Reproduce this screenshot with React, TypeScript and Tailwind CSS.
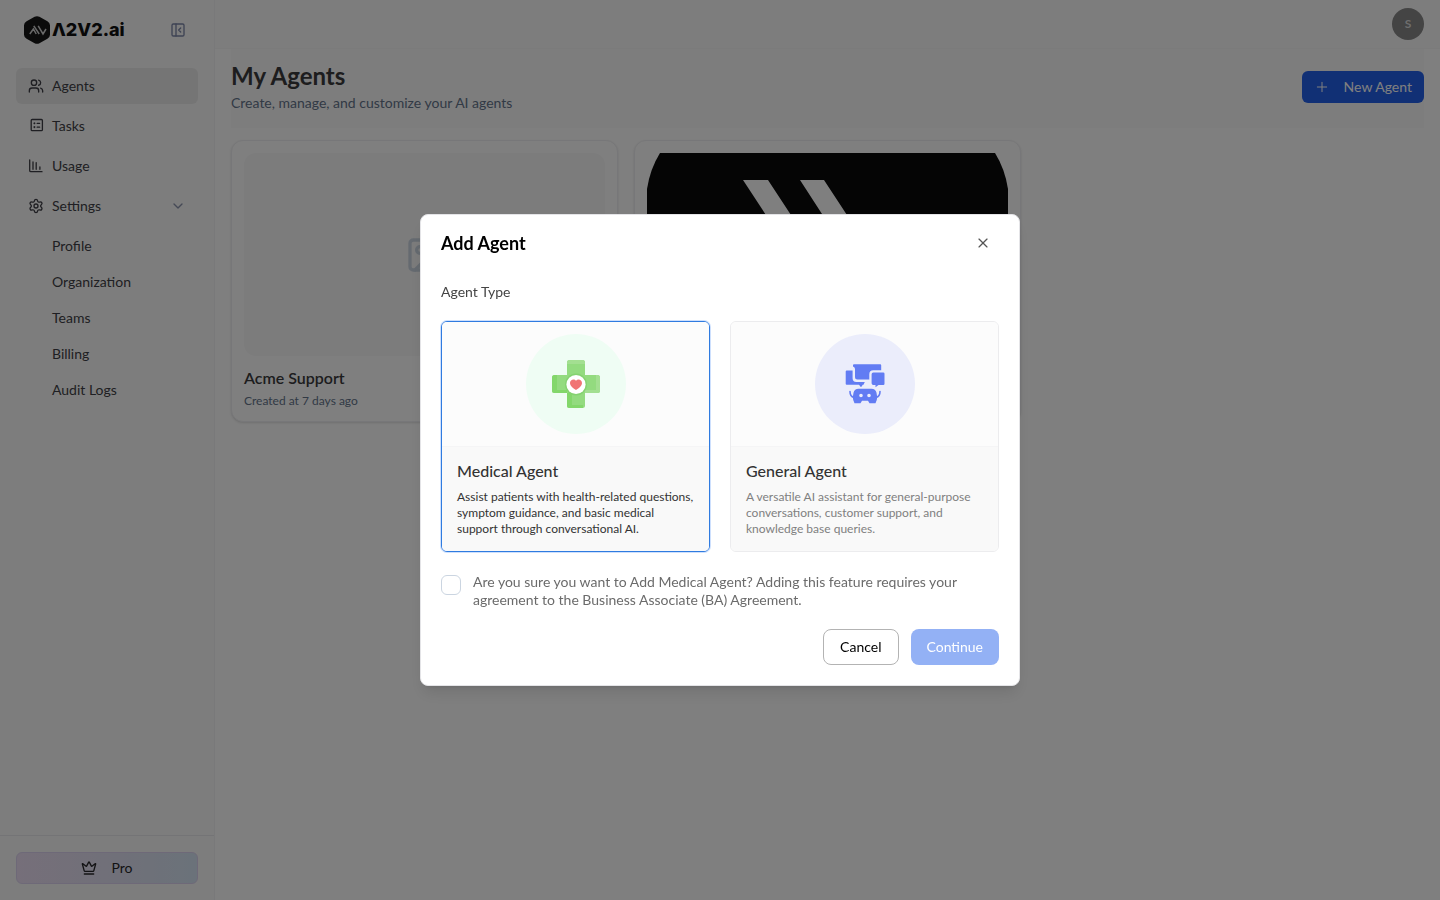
import { ChevronDown, Crown, Image as ImageIcon, PanelLeftClose, Plus, Settings, Users, X } from "lucide-react";
import type { ReactNode } from "react";

const settingsLinks = ["Profile", "Organization", "Teams", "Billing", "Audit Logs"];

function TasksIcon() {
  return (
    <svg className="size-4" viewBox="0 0 16 16" fill="none" stroke="currentColor" strokeWidth="1.3" strokeLinecap="round" strokeLinejoin="round">
      <rect x="3.2" y="1.5" width="11.2" height="11.2" rx="1" />
      <path d="M6 5.2h.8M6 9h.8M9.2 5.4h2.4M9.2 9.2h2.4M6.4 4.9v.8M6.4 8.700v.8" />
    </svg>
  );
}

function UsageIcon() {
  return (
    <svg className="size-4" viewBox="0 0 16 16" fill="none" stroke="currentColor" strokeWidth="1.3" strokeLinecap="round" strokeLinejoin="round">
      <path d="M1.7 1.900v10.600a1.200 1.200 0 0 0 1.200 1.200H14" />
      <path d="M5 3.900v7.400M8.200 4.600v6.700M11.900 9v2.300" />
    </svg>
  );
}

function Logo() {
  return (
    <div className="flex items-center gap-0.5 pl-2">
      <svg className="h-7 w-[26px]" viewBox="0 0 26 28">
        <path d="M10.6.8a5 5 0 0 1 4.8 0l8 4.4A4.8 4.8 0 0 1 26 9.3v9.4a4.8 4.8 0 0 1-2.6 4.1l-8 4.4a5 5 0 0 1-4.8 0l-8-4.4A4.8 4.8 0 0 1 0 18.7V9.3a4.8 4.8 0 0 1 2.6-4.1z" fill="#161616" />
        <path d="M5.800 18 9.400 13l2.800 5M9.800 9.800l5.400 8.200M14.200 9.800l4.800 8.200 3-5" fill="none" stroke="#d0d0d0" strokeWidth="1.500" />
      </svg>
      <span className="font-['Inter'] text-lg leading-7 font-extrabold text-[#111]">Λ2V2.ai</span>
    </div>
  );
}

function NavItem({ icon, label, active, children }: { icon: ReactNode; label: string; active?: boolean; children?: ReactNode }) {
  return (
    <a href="#" className={`flex h-9 items-center gap-2 rounded-md px-3 ${active ? "bg-[#ebebeb]" : ""}`}>
      {icon}
      <span className="flex-1">{label}</span>
      {children}
    </a>
  );
}

function Sidebar() {
  return (
    <aside className="flex w-[215px] shrink-0 flex-col border-r border-[#f3f3f5] bg-[#fafafa] text-sm text-[#3f3f46]">
      <div className="flex items-center justify-between px-4 pt-4 pb-6">
        <Logo />
        <button type="button" aria-label="Collapse sidebar" className="mr-3 text-[#7c86a8]">
          <PanelLeftClose className="size-4" />
        </button>
      </div>
      <nav className="flex flex-1 flex-col gap-1 px-4">
        <NavItem icon={<Users className="size-4" />} label="Agents" active />
        <NavItem icon={<TasksIcon />} label="Tasks" />
        <NavItem icon={<UsageIcon />} label="Usage" />
        <NavItem icon={<Settings className="size-4" />} label="Settings">
          <ChevronDown className="size-4 text-[#8b93ad]" />
        </NavItem>
        <div className="flex flex-col">
          {settingsLinks.map((label) => (
            <a key={label} href="#" className="flex h-9 items-center pl-9">
              {label}
            </a>
          ))}
        </div>
      </nav>
      <div className="border-t border-[#e9e9ed] p-4">
        <button type="button" className="flex h-8 w-full items-center justify-center gap-3.5 rounded-md border border-[#dcd3f0] bg-linear-to-r from-[#ecdff4] via-[#e2e0f2] to-[#d6e5f4] text-[#27272a]">
          <Crown className="size-4" />
          Pro
        </button>
      </div>
    </aside>
  );
}

function AgentCard({ title, image }: { title: string; image: ReactNode }) {
  return (
    <article className="rounded-xl border border-[#efeff2] bg-white p-3 shadow-sm">
      <div className="aspect-video overflow-hidden">{image}</div>
      <h2 className="mt-3 text-base leading-5 font-semibold text-[#3a3a3d]">{title}</h2>
      <p className="mt-[5px] text-xs leading-4 text-[#64748b]">Created at 7 days ago</p>
    </article>
  );
}

function AgentsPage() {
  return (
    <div className="flex flex-1 flex-col bg-white">
      <header className="flex h-[49px] items-center justify-end border-b border-[#f7f7f7] bg-[#fafafa] px-4">
        <button type="button" className="size-8 rounded-full bg-[#888] text-xs font-bold text-[#ddd]">
          S
        </button>
      </header>
      <main className="flex flex-col gap-3 px-4">
        <div className="flex items-center justify-between bg-[#fbfbfb] pt-[11px] pb-3.5">
          <div>
            <h1 className="text-2xl leading-8 font-bold text-[#3a3a3d]">My Agents</h1>
            <p className="text-sm leading-[22px] text-[#64748b]">Create, manage, and customize your AI agents</p>
          </div>
          <button type="button" className="flex h-8 items-center gap-3.5 rounded-md bg-[#2360eb] px-3 text-sm text-white">
            <Plus className="size-4" strokeWidth={1.5} />
            New Agent
          </button>
        </div>
        <div className="grid grid-cols-3 gap-4">
          <AgentCard
            title="Acme Support"
            image={
              <div className="flex h-full items-center justify-center rounded-xl bg-[#f8f8f9]">
                <ImageIcon className="size-10 text-[#cbd5e1]" />
              </div>
            }
          />
          <AgentCard
            title="General Assistant"
            image={
              <svg className="size-full" viewBox="0 0 361 203" preserveAspectRatio="none">
                <path d="M13 0H348Q358 16 361 36V203H0V36Q3 16 13 0Z" fill="#0a0a0a" />
                <path d="M96 27h25l80 122h-25zM153 27h24l80 122h-25z" fill="#fff" />
              </svg>
            }
          />
        </div>
      </main>
    </div>
  );
}

function MedicalIcon() {
  return (
    <svg className="size-12" viewBox="0 0 48 48">
      <rect x="15" width="18" height="48" rx="2.500" fill="#93db7f" />
      <rect y="15" width="48" height="18" rx="2.500" fill="#93db7f" />
      <path d="M17.500 0h13A2.500 2.500 0 0 1 33 2.500V4H15V2.500A2.500 2.500 0 0 1 17.500 0zM44 15h1.500a2.500 2.500 0 0 1 2.500 2.500v13a2.500 2.500 0 0 1-2.500 2.500H33V30h11z" fill="#a3df91" />
      <path d="M2.500 15A2.500 2.500 0 0 0 0 17.500v13A2.500 2.500 0 0 0 2.500 33H15v-3H5V15zM15 33v12.500a2.500 2.500 0 0 0 2.500 2.500H31v-3H20V33z" fill="#83d76b" />
      <circle cx="24" cy="24.500" r="11" fill="#85d271" />
      <circle cx="24" cy="24.500" r="9.600" fill="#fff" />
      <path d="M24 29.900c-3.200-1.900-6-4-6-6.900 0-3.400 4.200-4.500 6-2.200 1.800-2.300 6-1.200 6 2.200 0 2.900-2.800 5-6 6.900z" fill="#f07575" />
    </svg>
  );
}

function GeneralIcon() {
  return (
    <svg className="size-10" viewBox="0 0 40 40" fill="#627cf3">
      <path d="M8 1.200Q8 .2 9 .2H35.200Q36.200 .2 36.200 1.200V6.300H28.300Q24.300 6.300 24.300 10.300V15.400H12.500Q10 15.400 10 12.900V5Q10 3 8 2.500z" />
      <path d="M1.700 6.500H7.600V14.200Q7.600 17.900 11.300 17.900H19.800L18.500 20.800H17.800L16 23.200 14 20.800H1.700Q.7 20.800 .7 19.800V7.500Q.7 6.500 1.700 6.500z" />
      <path d="M28.300 8.600H38.300Q39.500 8.600 39.500 9.800V19.700Q39.500 20.900 38.300 20.900H33.500L30.500 23.200V20.900H28.300Q26.600 20.900 26.600 19.200V10.300Q26.600 8.600 28.300 8.600z" />
      <path fillRule="evenodd" d="M13.500 24.800H26.500Q30.500 24.800 31.500 28.800L32.200 33Q32.200 36 30.500 39.200H24.500L23 36.800H17L15.500 39.200H9.500Q7.800 36 7.800 33L8.500 28.800Q9.500 24.800 13.500 24.800zM16 29.700a1.800 1.800 0 1 0 0 3.600 1.800 1.800 0 0 0 0-3.600zM24 29.700a1.800 1.800 0 1 0 0 3.600 1.800 1.800 0 0 0 0-3.600z" />
      <path d="M5 27.500Q5 32.500 9 33.500M35 27.500Q35 32.500 31 33.500" fill="none" stroke="#627cf3" strokeWidth="1.600" strokeLinecap="round" />
    </svg>
  );
}

type AgentTypeProps = { title: string; text: string; icon: ReactNode; iconBg: string; selected?: boolean };

function AgentType({ title, text, icon, iconBg, selected }: AgentTypeProps) {
  return (
    <button
      type="button"
      aria-pressed={!!selected}
      className={`flex flex-col overflow-hidden rounded-md border text-left ${selected ? "border-[#2f7be0] ring-1 ring-[#3b82f6]/25" : "border-[#ececee]"}`}
    >
      <span className="flex w-full justify-center border-b border-[#f5f5f6] bg-[#fcfcfc] p-3">
        <span className={`flex size-[100px] items-center justify-center rounded-full ${iconBg}`}>{icon}</span>
      </span>
      <span className="w-full flex-1 bg-[#f9f9f9] px-[15px] pt-3.5 pb-3.5">
        <span className="block text-base leading-5 font-medium text-[#333]">{title}</span>
        <span className={`mt-2 block text-xs leading-4 ${selected ? "text-[#333]" : "text-[#808080]"}`}>{text}</span>
      </span>
    </button>
  );
}

function AddAgentDialog() {
  return (
    <div className="fixed inset-0 flex items-center justify-center bg-black/50">
      <div role="dialog" aria-labelledby="dialog-title" className="w-[600px] rounded-lg border border-[#e4e4e7] bg-white p-5 shadow-lg">
        <div className="mb-[30px] flex h-4 items-center justify-between">
          <h2 id="dialog-title" className="text-lg leading-4 font-bold text-black">
            Add Agent
          </h2>
          <button type="button" aria-label="Close" className="mr-2 text-[#555]">
            <X className="size-4" strokeWidth={1.75} />
          </button>
        </div>
        <p className="text-sm leading-[22px] text-[#444]">Agent Type</p>
        <div className="mt-[18px] grid grid-cols-2 gap-5">
          <AgentType
            title="Medical Agent"
            text="Assist patients with health-related questions, symptom guidance, and basic medical support through conversational AI."
            icon={<MedicalIcon />}
            iconBg="bg-[#effdf4]"
            selected
          />
          <AgentType
            title="General Agent"
            text="A versatile AI assistant for general-purpose conversations, customer support, and knowledge base queries."
            icon={<GeneralIcon />}
            iconBg="bg-[#ebedfb]"
          />
        </div>
        <div className="mt-[21px] flex items-start gap-3">
          <input id="agree" type="checkbox" className="mt-0.5 size-5 shrink-0 appearance-none rounded-md border border-[#cbd5e1] bg-white checked:bg-[#2360eb]" />
          <label htmlFor="agree" className="text-sm leading-[18px] text-[#6b6b6b]">
            Are you sure you want to Add Medical Agent? Adding this feature requires your agreement to the Business Associate (BA) Agreement.
          </label>
        </div>
        <div className="mt-5 flex justify-end gap-3 text-sm">
          <button type="button" className="h-9 rounded-lg border border-[#b3b3b3] px-4 text-black">
            Cancel
          </button>
          <button type="button" disabled className="h-9 rounded-lg bg-[#93b1f5] px-4 text-white">
            Continue
          </button>
        </div>
      </div>
    </div>
  );
}

export default function App() {
  return (
    <div className="flex min-h-screen font-['Lato',sans-serif]">
      <Sidebar />
      <AgentsPage />
      <AddAgentDialog />
    </div>
  );
}
